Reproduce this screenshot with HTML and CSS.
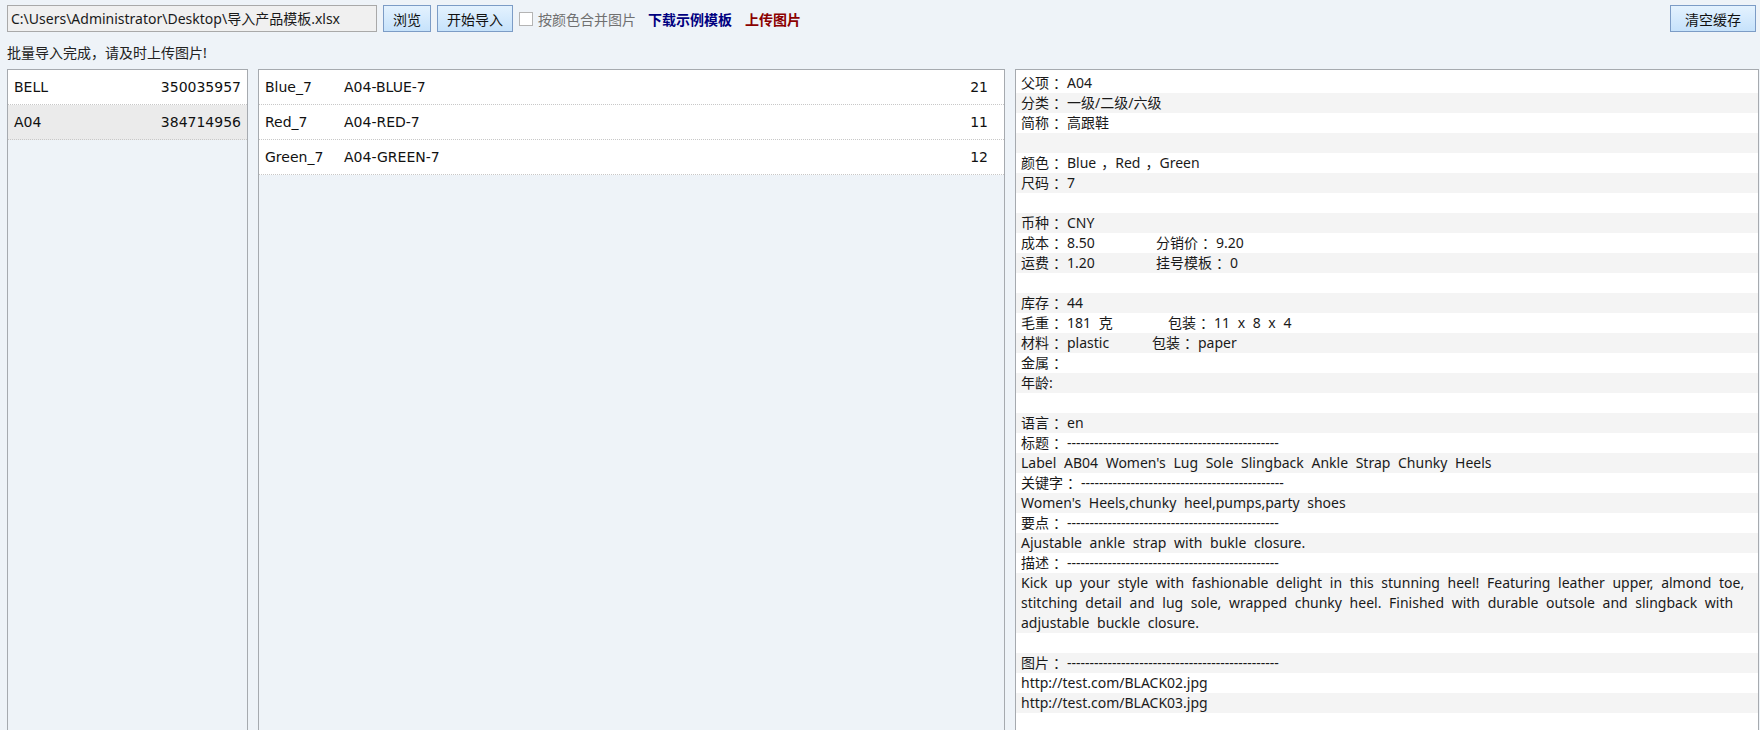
FILE: index.html
```html
<!DOCTYPE html>
<html lang="zh-CN">
<head>
  <meta charset="UTF-8" />
  <title>导入产品</title>
  <link rel="stylesheet" href="styles.css">
</head>
<body>

<!-- Toolbar -->
<div class="toolbar">
  <div class="file-box">C:\Users\Administrator\Desktop\导入产品模板.xlsx</div>
  <button class="btn btn-browse">浏览</button>
  <button class="btn btn-import">开始导入</button>
  <label class="check"><span class="box"></span>按颜色合并图片</label>
  <a class="link link-blue" href="#">下载示例模板</a>
  <a class="link link-red" href="#">上传图片</a>
  <button class="btn btn-clear">清空缓存</button>
</div>

<div class="status">批量导入完成，请及时上传图片!</div>

<div class="panels">
  <!-- Parent list -->
  <div class="panel panel-left">
    <div class="row"><span>BELL</span><span>350035957</span></div>
    <div class="row selected"><span>A04</span><span>384714956</span></div>
  </div>

  <!-- Variant list -->
  <div class="panel panel-mid">
    <div class="row"><span class="color">Blue_7</span><span class="sku">A04-BLUE-7</span><span class="qty">21</span></div>
    <div class="row"><span class="color">Red_7</span><span class="sku">A04-RED-7</span><span class="qty">11</span></div>
    <div class="row"><span class="color">Green_7</span><span class="sku">A04-GREEN-7</span><span class="qty">12</span></div>
  </div>

  <!-- Detail -->
  <div class="panel panel-detail">
    <div class="line">父项<span class="p">：</span>A04</div>
    <div class="line">分类<span class="p">：</span>一级/二级/六级</div>
    <div class="line">简称<span class="p">：</span>高跟鞋</div>
    <div class="line"></div>
    <div class="line">颜色<span class="p">：</span>Blue<span class="p comma">，</span>Red<span class="p comma">，</span>Green</div>
    <div class="line">尺码<span class="p">：</span>7</div>
    <div class="line"></div>
    <div class="line">币种<span class="p">：</span>CNY</div>
    <div class="line"><span class="col w135">成本<span class="p">：</span>8.50</span>分销价<span class="p">：</span>9.20</div>
    <div class="line"><span class="col w135">运费<span class="p">：</span>1.20</span>挂号模板<span class="p">：</span>0</div>
    <div class="line"></div>
    <div class="line">库存<span class="p">：</span>44</div>
    <div class="line"><span class="col w147">毛重<span class="p">：</span>181 克</span>包装<span class="p">：</span>11 x 8 x 4</div>
    <div class="line"><span class="col w131">材料<span class="p">：</span>plastic</span>包装<span class="p">：</span>paper</div>
    <div class="line">金属<span class="p">：</span></div>
    <div class="line">年龄:</div>
    <div class="line"></div>
    <div class="line">语言<span class="p">：</span>en</div>
    <div class="line">标题<span class="p">：</span><span class="dash"></span></div>
    <div class="line">Label AB04 Women's Lug Sole Slingback Ankle Strap Chunky Heels</div>
    <div class="line">关键字<span class="p">：</span><span class="dash short"></span></div>
    <div class="line">Women's Heels,chunky heel,pumps,party shoes</div>
    <div class="line">要点<span class="p">：</span><span class="dash"></span></div>
    <div class="line">Ajustable ankle strap with bukle closure.</div>
    <div class="line">描述<span class="p">：</span><span class="dash"></span></div>
    <div class="line">Kick up your style with fashionable delight in this stunning heel! Featuring leather upper, almond toe, stitching detail and lug sole, wrapped chunky heel. Finished with durable outsole and slingback with adjustable buckle closure.</div>
    <div class="line"></div>
    <div class="line">图片<span class="p">：</span><span class="dash"></span></div>
    <div class="line">http://test.com/BLACK02.jpg</div>
    <div class="line">http://test.com/BLACK03.jpg</div>
  </div>
</div>

<script>
  // separator lines under the section labels
  document.querySelectorAll('.dash').forEach(d => {
    d.textContent = '-'.repeat(d.classList.contains('short') ? 45 : 47);
  });
</script>

</body>
</html>
```

FILE: styles.css
```css
body {
  margin: 0;
  background: #eef3f8;
  color: #1a1a1a;
  font-family: "Noto Sans", "Noto Sans CJK SC", sans-serif;
  font-size: 14px;
  overflow: hidden;
}

.toolbar {
  display: flex;
  align-items: center;
  height: 27px;
  padding: 5px 4px 0 7px;
}

.file-box {
  box-sizing: border-box;
  width: 370px;
  height: 27px;
  line-height: 25px;
  padding: 0 3px;
  border: 1px solid #a9a9a9;
  background: #f0f0f0;
  white-space: nowrap;
  overflow: hidden;
}

.btn {
  height: 27px;
  margin-left: 6px;
  padding: 0;
  border: 1px solid #7c9cc6;
  border-radius: 0;
  background: linear-gradient(#e4f2fe, #c6e2fb);
  font-family: inherit;
  font-size: 14px;
  color: #111;
}

.btn-browse { width: 48px; }
.btn-import { width: 76px; }

.btn-clear {
  margin-left: auto;
  width: 86px;
}

.check {
  display: flex;
  align-items: center;
  margin-left: 6px;
  color: #707070;
}

.check .box {
  width: 12px;
  height: 12px;
  margin-right: 5px;
  border: 1px solid #b4b4b4;
  background: #fff;
}

.link {
  font-weight: bold;
  text-decoration: none;
  margin-left: 12px;
}

.link-blue { color: #000080; }
.link-red  { color: #8b0000; margin-left: 13px; }

.status {
  margin: 11px 0 0 7px;
  line-height: 20px;
  color: #222;
}

.panels {
  display: flex;
  gap: 10px;
  margin: 6px 1px 0 7px;
}

.panel {
  box-sizing: border-box;
  height: 680px;
  border: 1px solid #a6aaaf;
}

.panel-left {
  width: 241px;
  font-family: "DejaVu Sans", sans-serif;
}

.panel-mid {
  width: 747px;
  font-family: "DejaVu Sans", sans-serif;
}

.panel-detail {
  flex: 1;
  padding-top: 3px;
  background: #fff;
}

.row {
  display: flex;
  align-items: center;
  height: 34px;
  padding: 0 6px;
  background: #fff;
  border-bottom: 1px dotted #c8c8c8;
  color: #111;
}

.panel-left .row {
  justify-content: space-between;
}

.row.selected {
  background: #ebebeb;
}

.panel-mid .row {
  padding-right: 16px;
}

.panel-mid .color {
  width: 79px;
}

.panel-mid .sku {
  flex: 1;
}

.line {
  min-height: 20px;
  line-height: 20px;
  padding: 0 6px 0 5px;
  word-spacing: 4px;
}

.line:nth-child(even) {
  background: #f4f4f4;
}

/* full-width punctuation sits in the middle of a wider cell */
.p {
  padding-left: 4px;
  word-spacing: 0;
}

.p.comma {
  padding-left: 5px;
}

.dash {
  word-spacing: 0;
}

.col { display: inline-block; }
.w131 { width: 131px; }
.w135 { width: 135px; }
.w147 { width: 147px; }
```
